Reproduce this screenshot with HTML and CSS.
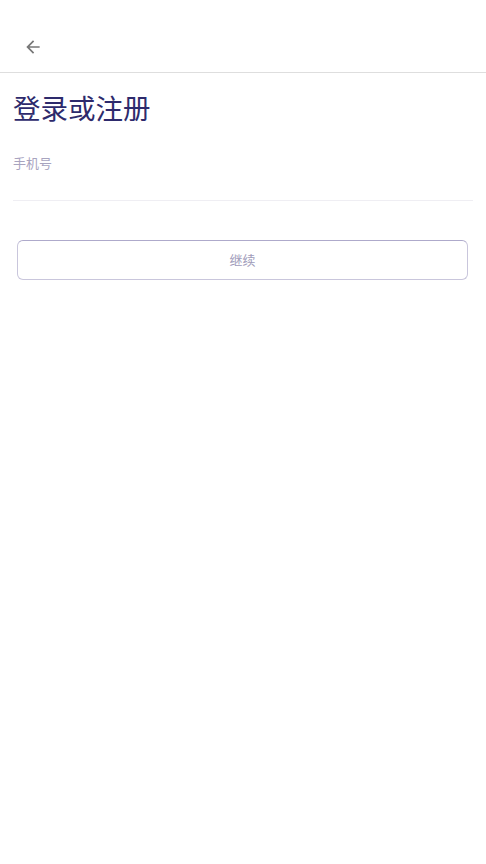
FILE: index.html
```
<!DOCTYPE html>
<html lang="zh-CN">
<head>
<meta charset="utf-8">
<title>登录或注册</title>
<link rel="stylesheet" href="styles.css">
</head>
<body>
<header class="topbar">
  <button class="back" aria-label="返回">
    <svg viewBox="0 0 24 24" width="20" height="20"><path d="M20 11H7.83l5.59-5.59L12 4l-8 8 8 8 1.41-1.41L7.83 13H20v-2z" fill="currentColor"/></svg>
  </button>
</header>
<main class="content">
  <h1 class="title">登录或注册</h1>
  <label class="field">
    <span class="field-label">手机号</span>
    <span class="field-input"></span>
  </label>
  <button class="continue">继续</button>
</main>
</body>
</html>
```
FILE: styles.css
```
* { box-sizing: border-box; }
html, body { margin: 0; padding: 0; background: #fff; }
body { font-family: "Noto Sans CJK SC", "Noto Sans", sans-serif; }
.topbar {
  height: 73px;
  border-bottom: 1px solid #dedede;
  display: flex;
  align-items: center;
  padding-left: 23px;
  padding-top: 21px;
}
.back {
  border: 0;
  background: none;
  padding: 0;
  width: 20px;
  height: 20px;
  color: #777;
  display: flex;
}
.content { padding: 0 13px; }
.title {
  margin: 14px 0 0;
  font-size: 27.5px;
  line-height: 40px;
  font-weight: 400;
  color: #2d2a6c;
}
.field {
  display: flex;
  flex-direction: column;
  margin-top: 26px;
  border-bottom: 1px solid #efeef3;
}
.field-label {
  font-size: 13px;
  line-height: 20px;
  color: #a8a4bf;
}
.field-input { height: 27px; }
.continue {
  display: block;
  margin: 39px 5px 0 4px;
  width: calc(100% - 9px);
  height: 40px;
  padding: 0 0 2px;
  background: #fff;
  border: 1px solid #c9c6dc;
  border-top-color: #aeaacb;
  border-radius: 6px;
  font-family: inherit;
  font-size: 13px;
  color: #a09cba;
}
```
